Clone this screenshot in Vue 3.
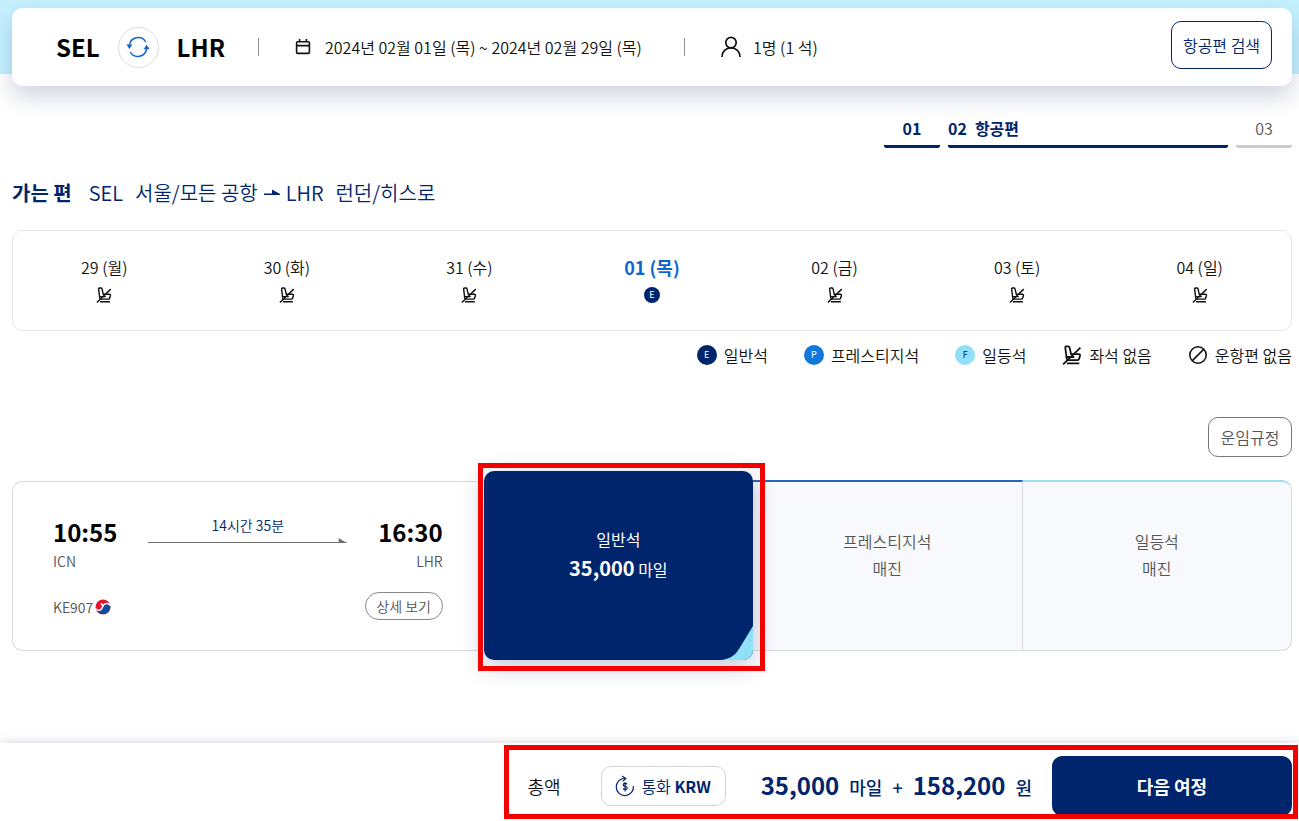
<script setup>
import { ref } from 'vue'

const days = [
  { id: 29, label: '29 (월)' },
  { id: 30, label: '30 (화)' },
  { id: 31, label: '31 (수)' },
  { id: 1, label: '01 (목)', available: true },
  { id: 2, label: '02 (금)' },
  { id: 3, label: '03 (토)' },
  { id: 4, label: '04 (일)' }
]
const selectedDay = ref(1)

const cabins = [
  { code: 'E', name: '일반석', tone: 'economy' },
  { code: 'P', name: '프레스티지석', tone: 'prestige' },
  { code: 'F', name: '일등석', tone: 'first' }
]
</script>

<template>
  <svg class="symbols" aria-hidden="true">
    <symbol id="no-seat" viewBox="0 0 18 18">
      <path d="M3 2.600Q2.700 1.200 3.900 1.200H5.600Q6.500 1.200 6.800 2.200L8.200 8.200H15Q16.600 8.200 16.200 9.600L15.400 12.400Q15.100 13.600 14 13.600H5.400Q4.300 13.600 4.200 12.400ZM4.400 10.800H11M4.400 16.600H15.600" />
      <path d="M1 17.400L16.600 2.400" />
    </symbol>
  </svg>

  <div class="page">
    <header class="hero">
      <div class="search">
        <strong class="city">SEL</strong>
        <button class="swap" type="button" aria-label="출발지와 도착지 바꾸기">
          <svg width="24" height="22" viewBox="0 0 24 22">
            <g fill="none" stroke="#1064cf" stroke-width="1.5">
              <path d="M3.400 9.600A8.800 8.800 0 0 1 19.800 6" />
              <path d="M20.600 12.400A8.800 8.800 0 0 1 4.200 16" />
            </g>
            <path fill="#1064cf" d="M0.400 8.600H6.400L3.400 13ZM17.600 13.200L20.600 8.800L23.600 13.200Z" />
          </svg>
        </button>
        <strong class="city">LHR</strong>
        <span class="divider"></span>
        <svg class="calendar-icon" width="16" height="18" viewBox="0 0 16 18" fill="none" stroke="#111" stroke-width="1.6">
          <rect x="1.6" y="3.8" width="12.8" height="11.6" rx="1" />
          <path d="M1.6 7.6H14.4M4.6 1V4M11.4 1V4" />
        </svg>
        <span class="dates">2024년 02월 01일 (목) ~ 2024년 02월 29일 (목)</span>
        <span class="divider"></span>
        <svg class="person-icon" width="20" height="22" viewBox="0 0 20 22" fill="none" stroke="#111" stroke-width="1.7">
          <circle cx="10" cy="6.6" r="5.2" />
          <path d="M1 21C1 15.500 4.800 11.800 10 11.800S19 15.500 19 21" />
        </svg>
        <span>1명 (1 석)</span>
        <button class="search-button" type="button">항공편 검색</button>
      </div>
    </header>

    <main class="content">
      <ol class="steps">
        <li class="step done">01</li>
        <li class="step current"><span>02</span><span>항공편</span></li>
        <li class="step">03</li>
      </ol>

      <h1 class="route">
        <b>가는 편</b>
        <span>SEL</span>
        <span>서울/모든 공항</span>
        <svg width="16" height="8" viewBox="0 0 16 8" aria-label="에서"><path fill="#00256c" d="M0 4.400H8V0.400L16 5V6H0Z" /></svg>
        <span>LHR</span>
        <span>런던/히스로</span>
      </h1>

      <div class="days">
        <button
          v-for="day in days"
          :key="day.id"
          type="button"
          class="day"
          :class="{ selected: selectedDay === day.id }"
          @click="selectedDay = day.id"
        >
          <span>{{ day.label }}</span>
          <i v-if="day.available" class="badge small economy">E</i>
          <svg v-else class="stroke" width="16" height="16"><use href="#no-seat" /></svg>
        </button>
      </div>

      <ul class="legend">
        <li v-for="cabin in cabins" :key="cabin.code">
          <i class="badge" :class="cabin.tone">{{ cabin.code }}</i>{{ cabin.name }}
        </li>
        <li><svg class="stroke" width="20" height="20"><use href="#no-seat" /></svg>좌석 없음</li>
        <li>
          <svg class="stroke" width="20" height="20" viewBox="0 0 20 20">
            <circle cx="10" cy="10" r="8.200" /><path d="M4.400 15.600L15.600 4.400" />
          </svg>운항편 없음
        </li>
      </ul>

      <button class="rules" type="button">운임규정</button>

      <section class="flight">
        <div class="info">
          <div class="point">
            <strong>10:55</strong>
            <span>ICN</span>
          </div>
          <div class="duration">
            <span>14시간 35분</span>
            <svg width="100%" height="6" aria-hidden="true">
              <rect y="5" width="100%" height="1" fill="#6b6b6b" />
              <svg x="100%" width="8" height="6" overflow="visible"><path d="M-8 1L0 6H-8Z" fill="#6b6b6b" /></svg>
            </svg>
          </div>
          <div class="point arrival">
            <strong>16:30</strong>
            <span>LHR</span>
          </div>
          <div class="number">
            KE907
            <svg width="16" height="16" viewBox="0 0 16 16" aria-label="대한항공">
              <circle cx="8" cy="8" r="7.500" fill="#e4142c" />
              <path d="M15.400 7A7.500 7.500 0 0 1 0.700 9.600C2.500 12.400 6.600 11.800 7.600 8C8.600 4 13.200 3.600 15.400 7Z" fill="#0a4c9e" />
              <path d="M15.600 6.800C13.200 3.400 8.600 4 7.600 8C6.600 11.800 2.500 12.400 0.500 9.600M7.600 8C7.800 5.800 7 4.800 5.600 4.600" fill="none" stroke="#fff" stroke-width="1.400" />
            </svg>
          </div>
          <button class="detail" type="button">상세 보기</button>
        </div>

        <button class="fare chosen" type="button">
          <span>일반석</span>
          <span><b>35,000</b> 마일</span>
          <svg class="corner" width="32" height="34" viewBox="0 0 32 34"><path fill="#8fe0f8" d="M0 34C10 33 15 28 18 23L32 0V34Z" /></svg>
          <span class="marker"></span>
        </button>
        <button class="fare prestige-fare" type="button" disabled>
          <span>프레스티지석</span>
          <span>매진</span>
        </button>
        <button class="fare first-fare" type="button" disabled>
          <span>일등석</span>
          <span>매진</span>
        </button>
      </section>
    </main>

    <footer class="total">
      <div class="summary">
        <span class="total-label">총액</span>
        <button class="currency" type="button">
          <svg width="20" height="22" viewBox="0 0 20 22" fill="none" stroke="#00256c" stroke-width="1.200">
            <path d="M18.400 11A8.600 8.600 0 1 1 10 3.400" />
            <path d="M7 1L10.800 3.600L7.600 6.400" />
            <path d="M12 9.400C11.600 8 8.200 8 8.200 9.900C8.200 11.800 12.200 11 12.200 13.200C12.200 15.200 8.400 15 8 13.400M10.100 7V16.400" />
          </svg>
          <span>통화 <b>KRW</b></span>
        </button>
        <p class="price">
          <strong>35,000</strong><span>마일</span><span>+</span><strong>158,200</strong><span>원</span>
        </p>
        <button class="next" type="button">다음 여정</button>
        <span class="marker"></span>
      </div>
    </footer>
  </div>
</template>

<style>
body {
  margin: 0;
  background: #fff;
}
</style>

<style scoped>
.page {
  display: flex;
  flex-direction: column;
  min-height: 100vh;
  overflow: hidden;
  color: #111;
  font-family: "Noto Sans CJK KR", "Noto Sans", sans-serif;
  font-size: 16px;
  font-weight: 350;
  line-height: 24px;
}
button {
  padding: 0;
  border: 0;
  background: none;
  color: inherit;
  font: inherit;
  cursor: pointer;
}
svg {
  display: block;
  flex: none;
}
.symbols {
  position: absolute;
  width: 0;
  height: 0;
}
.stroke {
  fill: none;
  stroke: #111;
  stroke-width: 1.6;
}
.hero {
  padding: 8px 7px 0 12px;
  background: linear-gradient(#c5f1ff 74px, transparent 74px);
}
.search {
  display: flex;
  align-items: center;
  box-sizing: border-box;
  height: 78px;
  padding: 0 20px 0 44px;
  border-radius: 10px;
  background: #fff;
  box-shadow: 0 10px 24px rgba(0, 28, 80, 0.2);
}
.city {
  color: #000;
  font-size: 24px;
  font-weight: 700;
  line-height: 32px;
}
.swap {
  display: flex;
  align-items: center;
  justify-content: center;
  box-sizing: border-box;
  width: 41px;
  height: 41px;
  margin: 0 18px;
  border: 1px solid #d9dbe1;
  border-radius: 50%;
}
.dates {
  min-width: 326px;
}
.divider {
  width: 1px;
  height: 18px;
  margin: 0 36px 0 33px;
  background: #8b8f99;
}
.calendar-icon {
  margin-right: 14px;
}
.person-icon {
  margin-right: 12px;
}
.search-button {
  box-sizing: border-box;
  width: 101px;
  height: 48px;
  margin: 0 0 4px auto;
  border: 1px solid #00256c;
  border-radius: 10px;
  color: #00256c;
}
.content {
  display: flex;
  flex: 1;
  flex-direction: column;
  padding: 30px 7px 0 12px;
}
.steps {
  display: flex;
  gap: 8px;
  justify-content: flex-end;
  margin: 0;
  padding: 0;
  list-style: none;
  color: #555;
}
.step {
  width: 56px;
  padding-bottom: 5px;
  border-bottom: 3px solid #ccc;
  border-radius: 2px;
  line-height: 24px;
  text-align: center;
}
.done,
.current {
  border-color: #00256c;
  color: #00256c;
  font-weight: 700;
}
.current {
  display: flex;
  gap: 8px;
  width: 280px;
}
.route {
  display: flex;
  align-items: center;
  margin: 31px 0 23px;
  color: #00256c;
  font-size: 20px;
  font-weight: 350;
  line-height: 28px;
}
.route b {
  margin-right: 17px;
  font-weight: 700;
}
.route span + span {
  margin-left: 12px;
}
.route svg {
  margin: 0 6px;
}
.days {
  display: grid;
  grid-template-columns: repeat(7, 1fr);
  border: 1px solid #e5e6ea;
  border-radius: 10px;
}
.day {
  display: flex;
  flex-direction: column;
  align-items: center;
  gap: 8px;
  padding: 24px 0 27px;
  line-height: 24px;
}
.selected {
  color: #1064cf;
  font-size: 18px;
  font-weight: 700;
}
.badge {
  display: inline-flex;
  align-items: center;
  justify-content: center;
  width: 20px;
  height: 20px;
  border-radius: 50%;
  color: #fff;
  font-size: 9px;
  font-style: normal;
  font-weight: 400;
  line-height: 12px;
}
.small {
  width: 16px;
  height: 16px;
}
.economy {
  background: #00256c;
}
.prestige {
  background: #0f78da;
}
.first {
  background: #8fe0f8;
  color: #00256c;
}
.legend {
  display: flex;
  gap: 36px;
  justify-content: flex-end;
  margin: 12px 0 50px;
  padding: 0;
  list-style: none;
}
.legend li {
  display: flex;
  gap: 7px;
  align-items: center;
}
.rules {
  box-sizing: border-box;
  width: 84px;
  height: 40px;
  margin: 0 0 24px auto;
  border: 1px solid #777;
  border-radius: 10px;
  color: #555;
}
.flight {
  display: grid;
  grid-template-columns: 7fr 4fr 4fr 4fr;
  height: 170px;
}
.info {
  display: grid;
  grid-template-columns: auto 1fr auto;
  align-content: start;
  padding: 33px 41px 0 40px;
  border: 1px solid #d8dade;
  border-right: 0;
  border-radius: 10px 0 0 10px;
}
.point {
  display: flex;
  flex-direction: column;
  color: #555;
  font-size: 14px;
}
.point strong {
  color: #000;
  font-size: 24px;
  font-weight: 700;
  line-height: 34px;
}
.arrival {
  text-align: right;
}
.duration {
  display: flex;
  flex-direction: column;
  gap: 2px;
  margin: 0 31px;
  color: #00256c;
  font-size: 14px;
  line-height: 20px;
  text-align: center;
}
.number {
  display: flex;
  grid-column: 1 / 3;
  gap: 2px;
  align-items: center;
  margin-top: 20px;
  color: #555;
  font-size: 14px;
  line-height: 28px;
}
.detail {
  box-sizing: border-box;
  justify-self: end;
  width: 78px;
  height: 28px;
  margin: 19px 0 0 -31px;
  border: 1px solid #888;
  border-radius: 14px;
  color: #555;
  font-size: 14px;
}
.fare {
  display: flex;
  flex-direction: column;
  gap: 3px;
  align-items: center;
  margin-top: -1px;
  padding: 47px 0 0;
  border-top: 2px solid;
  border-bottom: 1px solid #d8dade;
  background: #f8f9fc;
  color: #555;
}
.prestige-fare {
  border-right: 1px solid #d8dade;
  border-top-color: #2468b8;
}
.first-fare {
  border-right: 1px solid #d8dade;
  border-top-color: #9bdff2;
  border-radius: 0 10px 10px 0;
}
.chosen {
  position: relative;
  z-index: 1;
  gap: 5px;
  margin: -10px 0 -9px;
  padding-top: 56px;
  border: 0;
  border-radius: 10px;
  background: #00256c;
  box-shadow: 0 6px 24px rgba(0, 28, 80, 0.25);
  color: #fff;
  font-weight: 400;
}
.chosen b {
  font-size: 20px;
  font-weight: 700;
}
.corner {
  position: absolute;
  right: 0;
  bottom: 0;
  border-bottom-right-radius: 10px;
}
.marker {
  position: absolute;
  inset: -8px -12px -11px -6px;
  border: 5px solid #f40000;
  pointer-events: none;
}
.total {
  display: flex;
  justify-content: flex-end;
  padding-right: 7px;
  background: #fff;
  box-shadow: 0 0 10px rgba(0, 28, 60, 0.18);
}
.summary {
  position: relative;
  display: flex;
  align-items: center;
  height: 60px;
  padding: 13px 0 5px;
}
.summary .marker {
  inset: 2px -6px 2px -24px;
}
.total-label {
  margin-right: 40px;
  font-size: 18px;
}
.currency {
  display: flex;
  gap: 6px;
  align-items: center;
  justify-content: center;
  box-sizing: border-box;
  width: 125px;
  height: 40px;
  border: 1px solid #d0d3da;
  border-radius: 10px;
  color: #00256c;
}
.currency b {
  font-weight: 700;
}
.price {
  display: flex;
  gap: 10px;
  align-items: baseline;
  margin: 0 20px 0 35px;
  color: #00256c;
  font-size: 18px;
  font-weight: 500;
  line-height: 32px;
}
.price strong {
  font-size: 24px;
  font-weight: 700;
}
.next {
  width: 240px;
  height: 60px;
  border-radius: 10px;
  background: #00256c;
  color: #fff;
  font-size: 18px;
  font-weight: 700;
}
</style>
